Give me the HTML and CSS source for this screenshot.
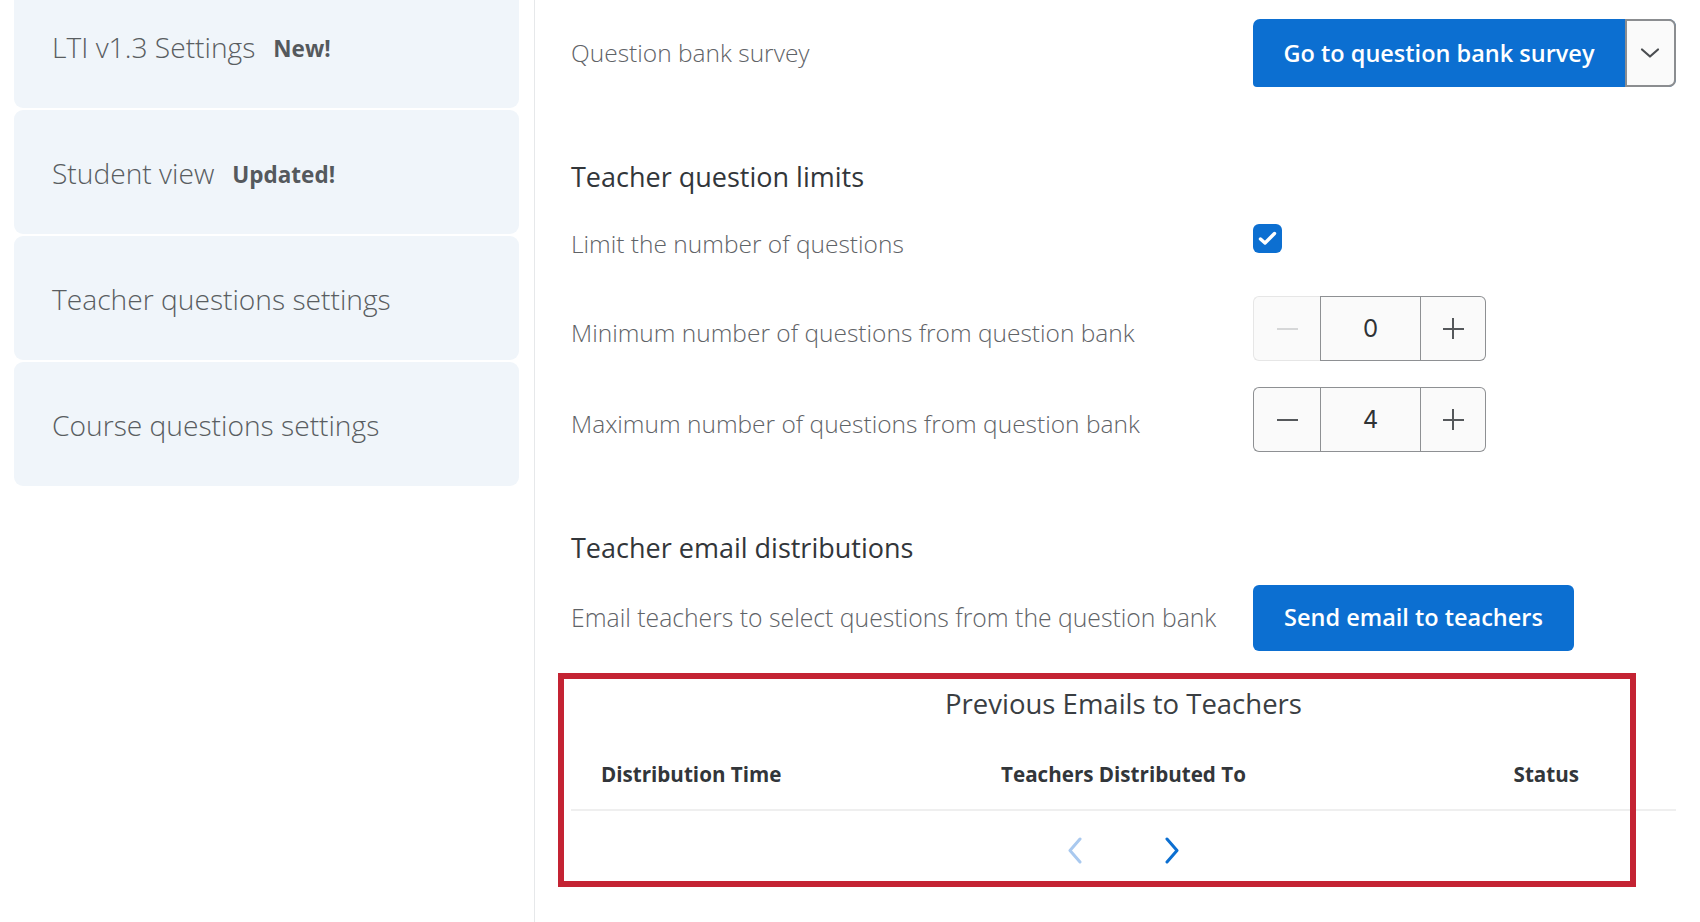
FILE: index.html
```html
<!DOCTYPE html>
<html lang="en">
<head>
<meta charset="utf-8">
<title>Teacher questions settings</title>
<link rel="stylesheet" href="styles.css">
</head>
<body>
<div class="page">
  <nav class="nav">
    <div class="nav-card nav-card--first"><span class="nav-text">LTI v1.3 Settings</span><span class="nav-badge">New!</span></div>
    <div class="nav-card"><span class="nav-text">Student view</span><span class="nav-badge">Updated!</span></div>
    <div class="nav-card"><span class="nav-text">Teacher questions settings</span></div>
    <div class="nav-card"><span class="nav-text">Course questions settings</span></div>
  </nav>

  <main class="main">
    <div class="row row--survey">
      <div class="label">Question bank survey</div>
      <div class="split-btn">
        <button class="split-main">Go to question bank survey</button>
        <button class="split-toggle" aria-label="More">
          <svg width="22" height="12" viewBox="0 0 22 12"><path d="M3 2.5 L11 9.5 L19 2.5" fill="none" stroke="#4a4d50" stroke-width="2.2" stroke-linecap="round" stroke-linejoin="round"/></svg>
        </button>
      </div>
    </div>

    <h2 class="heading heading--limits">Teacher question limits</h2>

    <div class="row row--check">
      <div class="label">Limit the number of questions</div>
      <div class="checkbox">
        <svg width="19" height="15" viewBox="0 0 19 15"><path d="M2.5 8 L7 12 L16.5 2.5" fill="none" stroke="#fff" stroke-width="3.4" stroke-linecap="round" stroke-linejoin="round"/></svg>
      </div>
    </div>

    <div class="row row--min">
      <div class="label">Minimum number of questions from question bank</div>
      <div class="stepper">
        <div class="step-btn step-btn--minus is-disabled"><span class="sym-minus"></span></div>
        <div class="step-val">0</div>
        <div class="step-btn step-btn--plus"><span class="sym-plus"></span></div>
      </div>
    </div>

    <div class="row row--max">
      <div class="label">Maximum number of questions from question bank</div>
      <div class="stepper">
        <div class="step-btn step-btn--minus"><span class="sym-minus"></span></div>
        <div class="step-val">4</div>
        <div class="step-btn step-btn--plus"><span class="sym-plus"></span></div>
      </div>
    </div>

    <h2 class="heading heading--email">Teacher email distributions</h2>

    <div class="row row--email">
      <div class="label">Email teachers to select questions from the question bank</div>
      <button class="btn-primary">Send email to teachers</button>
    </div>

    <section class="table">
      <div class="table-title">Previous Emails to Teachers</div>
      <div class="table-head">
        <div class="th th--time">Distribution Time</div>
        <div class="th th--teachers">Teachers Distributed To</div>
        <div class="th th--status">Status</div>
      </div>
      <div class="pager">
        <svg class="pager-prev" width="17" height="27" viewBox="0 0 17 27"><path d="M14 2 L4 13.5 L14 25" fill="none" stroke="#a9c9ef" stroke-width="3" stroke-linecap="round" stroke-linejoin="round"/></svg>
        <svg class="pager-next" width="17" height="27" viewBox="0 0 17 27"><path d="M3 2 L13 13.5 L3 25" fill="none" stroke="#0c6fd1" stroke-width="3" stroke-linecap="round" stroke-linejoin="round"/></svg>
      </div>
      <div class="highlight"></div>
    </section>
  </main>
</div>
</body>
</html>
```
FILE: styles.css
```css
* { box-sizing: border-box; }

html, body {
  margin: 0;
  background: #ffffff;
}

body {
  font-family: "Open Sans", "Noto Sans", sans-serif;
  color: #32363a;
  overflow: hidden;
}

.page {
  display: flex;
  min-height: 100vh;
}

/* ---------- left navigation ---------- */
.nav {
  width: 535px;
  flex: none;
  padding: 0 15px 0 14px;
  border-right: 1px solid #e6e8ea;
  display: flex;
  flex-direction: column;
  gap: 2px;
}

.nav-card {
  height: 124px;
  background: #f0f5fa;
  border-radius: 9px;
  display: flex;
  align-items: center;
  padding-left: 38px;
  gap: 18px;
}

.nav-card--first {
  margin-top: -16px;
}

.nav-text {
  font-size: 28.2px;
  font-weight: 300;
  color: #595d61;
  position: relative;
  top: 1px;
}

.nav-badge {
  font-size: 22.5px;
  font-weight: 700;
  color: #55595d;
  position: relative;
  top: 2px;
}

/* ---------- main content ---------- */
.main {
  flex: 1;
  padding: 19px 24px 0 36px;
  display: flex;
  flex-direction: column;
}

.row {
  display: grid;
  grid-template-columns: 682px auto;
  align-items: center;
}

.label {
  font-size: 24.5px;
  font-weight: 300;
  color: #5f6367;
  line-height: 36px;
}

.heading {
  margin: 0;
  font-size: 27px;
  font-weight: 400;
  color: #32363a;
  line-height: 36px;
}

.heading--limits { margin-top: 72px; }
.heading--email { margin-top: 78px; }

.row--check {
  margin-top: 29px;
  align-items: start;
  height: 40px;
}
.row--check .label { padding-top: 2px; }

.row--min { margin-top: 32px; }
.row--max { margin-top: 26px; }
.row--min .label, .row--max .label { padding-top: 9px; }
.row--email { margin-top: 19px; }
.row--email .label { font-size: 24.75px; }

/* split button */
.split-btn {
  display: flex;
  width: 423px;
  height: 68px;
  background: #0c6fd1;
  border-radius: 7px 8px 8px 4px;
}

.split-main {
  flex: 1;
  border: 0;
  background: transparent;
  color: #ffffff;
  font-family: "Open Sans", sans-serif;
  font-size: 23.5px;
  font-weight: 600;
  padding: 0;
  cursor: pointer;
}

.split-toggle {
  width: 51px;
  flex: none;
  border: 2px solid #8b8d90;
  border-radius: 0 7px 7px 0;
  background: #fafafa;
  display: flex;
  align-items: center;
  justify-content: center;
  padding: 0 2px 0 0;
}

/* checkbox */
.checkbox {
  width: 29px;
  height: 29px;
  border-radius: 6px;
  background: #0c6fd1;
  display: flex;
  align-items: center;
  justify-content: center;
}

/* stepper */
.stepper {
  display: flex;
  height: 65px;
  width: 233px;
}

.step-btn, .step-val {
  border: 1.5px solid #8e9093;
  background: #fafafa;
  display: flex;
  align-items: center;
  justify-content: center;
}

.step-btn--minus {
  width: 67px;
  border-radius: 6px 0 0 6px;
  border-right: 0;
}

.step-btn--minus.is-disabled {
  border-color: #e6e6e6;
}

.step-val {
  width: 101px;
  font-size: 24px;
  font-weight: 400;
  color: #2f3235;
  font-family: "Inter", "Open Sans", sans-serif;
}

.step-btn--plus {
  flex: 1;
  border-radius: 0 6px 6px 0;
  border-left: 0;
}

.sym-minus, .sym-plus {
  position: relative;
  width: 21px;
  height: 21px;
  display: block;
}

.sym-minus::before, .sym-plus::before, .sym-plus::after {
  content: "";
  position: absolute;
  background: #55585b;
}

.sym-minus::before, .sym-plus::before {
  left: 0;
  right: 0;
  top: 9.5px;
  height: 2px;
}

.sym-plus::after {
  top: 0;
  bottom: 0;
  left: 9.5px;
  width: 2px;
}

.is-disabled .sym-minus::before {
  background: #d6d7d8;
}

/* primary button */
.btn-primary {
  width: 321px;
  height: 66px;
  border: 0;
  border-radius: 6px;
  background: #0c6fd1;
  color: #ffffff;
  font-family: "Open Sans", sans-serif;
  font-size: 23.5px;
  font-weight: 600;
  padding: 0 0 2px;
  cursor: pointer;
}

/* previous emails table */
.table {
  position: relative;
  margin-top: 35px;
  width: 1105px;
}

.table-title {
  text-align: center;
  font-size: 27.5px;
  font-weight: 400;
  color: #3a3e42;
  line-height: 36px;
}

.table-head {
  display: grid;
  grid-template-columns: 1fr 1fr 1fr;
  padding: 37px 0 20px;
  border-bottom: 2px solid #efefef;
  line-height: 30px;
}

.th {
  font-size: 20.6px;
  font-weight: 700;
  color: #32363a;
}

.th--time { padding-left: 30px; }
.th--teachers { text-align: center; }
.th--status { text-align: right; padding-right: 97px; }

.pager {
  height: 78px;
  display: flex;
  align-items: center;
  justify-content: center;
  gap: 81px;
}

/* annotation frame drawn over the table */
.highlight {
  position: absolute;
  left: -13px;
  top: -13px;
  width: 1078px;
  height: 214px;
  border: 6px solid #c42333;
  pointer-events: none;
}
```
